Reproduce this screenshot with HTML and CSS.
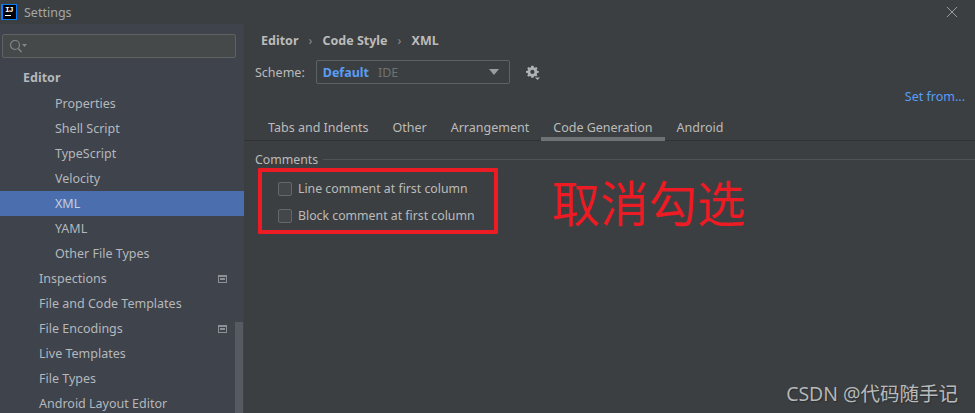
FILE: index.html
```html
<!doctype html>
<html lang="en">
<head>
<title>Settings</title>
<meta charset="utf-8">
<link rel="stylesheet" href="styles.css">
</head>
<body>

<div id="win">

	<div id="titlebar">
		<div id="logo">
			<span id="logoText">IJ</span>
			<span id="logoBar"></span>
		</div>
		<span id="titleText">Settings</span>
		<svg id="closeBtn" width="12" height="12" viewBox="0 0 12 12">
			<path d="M1 1 L11 11 M11 1 L1 11" stroke="#9a9c9e" stroke-width="1" fill="none"/>
		</svg>
	</div>

	<div id="content">

		<div id="sidebar">
			<div id="search">
				<svg width="20" height="14" viewBox="0 0 20 14">
					<circle cx="6" cy="6" r="4.5" stroke="#83878b" stroke-width="1.2" fill="none"/>
					<path d="M9.3 9.5 L12.5 13" stroke="#83878b" stroke-width="1.4" fill="none"/>
					<path d="M13 5 L18 5 L15.5 8 Z" fill="#83878b"/>
				</svg>
			</div>
			<a class="item head">Editor</a>
			<a class="item sub">Properties</a>
			<a class="item sub">Shell Script</a>
			<a class="item sub">TypeScript</a>
			<a class="item sub">Velocity</a>
			<a class="item sub active">XML</a>
			<a class="item sub">YAML</a>
			<a class="item sub">Other File Types</a>
			<a class="item">Inspections <i class="projIcon"></i></a>
			<a class="item">File and Code Templates</a>
			<a class="item">File Encodings <i class="projIcon"></i></a>
			<a class="item">Live Templates</a>
			<a class="item">File Types</a>
			<a class="item">Android Layout Editor</a>
			<div id="scrollThumb"></div>
		</div>

		<div id="main">
			<div id="crumbs">
				<span>Editor</span><em>›</em><span>Code Style</span><em>›</em><span>XML</span>
			</div>

			<div id="schemeRow">
				<label>Scheme:</label>
				<div id="combo">
					<b>Default</b>
					<span>IDE</span>
					<i id="comboArrow"></i>
				</div>
				<svg id="gear" width="18" height="18" viewBox="0 0 18 18">
					<path d="M7 1 H10 L10.4 3.1 L11.9 3.8 L13.7 2.6 L15.4 4.3 L14.2 6.1 L14.9 7.6 L17 8 V10.4 L14.9 10.8 L14.2 12.3 L15.2 14 L13.5 15.4 L11.9 14.6 L10.4 15.3 L10 17 H7 L6.6 15.3 L5.1 14.6 L3.3 15.8 L1.6 14.1 L2.8 12.3 L2.1 10.8 L0 10.4 V8 L2.1 7.6 L2.8 6.1 L1.6 4.3 L3.3 2.6 L5.1 3.8 L6.6 3.1 Z M8.5 6.4 A2.8 2.8 0 1 0 8.5 12 A2.8 2.8 0 1 0 8.5 6.4 Z" fill="#afb1b3" fill-rule="evenodd" transform="translate(1 1) scale(0.75)"/>
					<path d="M10 13.5 H15 L12.5 16 Z" fill="#afb1b3"/>
				</svg>
			</div>

			<div id="setFromRow"><a>Set from...</a></div>

			<div id="tabs">
				<a>Tabs and Indents</a>
				<a>Other</a>
				<a>Arrangement</a>
				<a class="on">Code Generation</a>
				<a>Android</a>
			</div>

			<div id="group">
				<div id="groupTitle"><span>Comments</span><hr></div>
				<label class="check"><i></i>Line comment at first column</label>
				<label class="check"><i></i>Block comment at first column</label>
			</div>
		</div>

	</div>

	<div id="redBox"></div>
	<div id="redText">取消勾选</div>
	<div id="mark">CSDN @代码随手记</div>

</div>

</body>
</html>
```

FILE: styles.css
```css
* { margin: 0; padding: 0; box-sizing: border-box; }
html, body { height: 100%; overflow: hidden; }

body {
	font-family: "Noto Sans", "Open Sans", sans-serif;
	font-size: 12.5px;
	color: #bbbbbb;
	background: #3c3f41;
}

#win {
	height: 100%; width: 100%;
	position: relative;
	display: flex;
	flex-direction: column;
	overflow: hidden;
}

/* title bar */
#titlebar {
	height: 24px;
	flex: none;
	display: flex;
	align-items: center;
	padding-left: 1px;
	padding-right: 17px;
	background: #3c3f41;
}
#logo {
	width: 16px; height: 16px;
	background: #000;
	border: 1px solid #087cfa;
	border-left-width: 2px;
	display: flex;
	flex-direction: column;
	padding: 1px 0 0 2px;
}
#logoText {
	font-family: "Liberation Mono", monospace;
	font-weight: bold;
	font-size: 8px;
	line-height: 7px;
	letter-spacing: -1px;
	color: #fff;
}
#logoBar {
	width: 6px; height: 1px;
	margin-top: 2px;
	background: #fff;
}
#titleText {
	margin-left: 7px;
	color: #a4a6a8;
}
#closeBtn { margin-left: auto; }

#content {
	flex: 1;
	min-height: 0;
	display: flex;
}

/* left tree */
#sidebar {
	width: 244px;
	flex: none;
	position: relative;
	overflow: hidden;
	padding-top: 10px;
	background: #3e434c;
}
#search {
	height: 24px;
	width: 234px;
	margin-left: 2px;
	margin-bottom: 7px;
	display: flex;
	align-items: center;
	padding-left: 6px;
	border: 1px solid #5f6263;
	border-radius: 2px;
	background: #45494a;
}
.item {
	height: 25px;
	flex: none;
	display: flex;
	align-items: center;
	padding-left: 39px;
	padding-right: 17px;
	white-space: nowrap;
	color: #b4b8bc;
}
.head {
	height: 26px;
	padding-left: 23px;
	padding-bottom: 2px;
	font-weight: bold;
}
.sub { padding-left: 55px; }
.active {
	background: #4b6eaf;
	color: #c6cfdc;
}
.projIcon {
	width: 9px; height: 8px;
	margin-left: auto;
	border: 1px solid #8d9196;
	border-top-width: 2px;
	background: linear-gradient(#8d9196, #8d9196) center / 5px 2px no-repeat;
}
#scrollThumb {
	position: absolute;
	right: 1px; bottom: 0;
	width: 8px; height: 91px;
	background: #565a61;
}

/* right panel */
#main {
	flex: 1;
	min-width: 0;
	display: flex;
	flex-direction: column;
}
#crumbs {
	height: 32px;
	display: flex;
	align-items: center;
	padding-left: 17px;
	font-weight: bold;
}
#crumbs em {
	font-style: normal;
	font-weight: normal;
	width: 24px;
	text-align: center;
	color: #8a8c8e;
}
#schemeRow {
	display: flex;
	align-items: center;
	height: 24px;
	margin-top: 4px;
	padding-left: 11px;
}
#combo {
	width: 194px; height: 24px;
	margin-left: 11px;
	display: flex;
	align-items: center;
	padding: 0 10px 0 6px;
	border: 1px solid #5f6263;
	border-radius: 2px;
	background: #3c3f41;
}
#combo b { color: #589df6; }
#combo span {
	margin-left: 9px;
	color: #6e7072;
}
#comboArrow {
	margin-left: auto;
	width: 0; height: 0;
	border-left: 5px solid transparent;
	border-right: 5px solid transparent;
	border-top: 6px solid #9a9c9e;
}
#gear {
	margin-left: 15px;
	margin-top: 2px;
}
#setFromRow {
	height: 24px;
	display: flex;
	align-items: center;
	justify-content: flex-end;
	padding-right: 10px;
}
#setFromRow a { color: #589df6; }
#tabs {
	height: 33px;
	display: flex;
	padding-left: 12px;
	border-bottom: 1px solid #323232;
}
#tabs a {
	display: flex;
	align-items: center;
	padding: 6px 12px 0;
	height: 32px;
	white-space: nowrap;
}
#tabs a.on {
	border-bottom: 4px solid #6f7275;
	height: 33px;
	padding-top: 9px;
}
#group {
	padding: 9px 0 0 11px;
	font-size: 12.3px;
}
#groupTitle {
	display: flex;
	align-items: center;
	height: 19px;
	margin-bottom: 6px;
}
#groupTitle hr {
	flex: 1;
	margin-left: 5px;
	border: none;
	border-top: 1px solid #505254;
}
.check {
	display: flex;
	align-items: center;
	height: 27px;
	padding-left: 23px;
}
.check i {
	width: 14px; height: 14px;
	margin-right: 6px;
	border: 1px solid #65686a;
	border-radius: 2px;
	background: #43474a;
}

/* annotations on top of the screenshot */
#redBox {
	position: absolute;
	left: 258px; top: 168px;
	width: 240px; height: 66px;
	border: 4px solid #ed1c24;
	border-radius: 1px;
}
#redText {
	position: absolute;
	left: 552px; top: 171px;
	font-family: "Noto Sans CJK SC", sans-serif;
	font-size: 48.5px;
	line-height: 60px;
	color: #ed1c24;
}
#mark {
	position: absolute;
	right: 17px; bottom: 7px;
	font-family: "Open Sans", "Noto Sans CJK SC", sans-serif;
	font-size: 19.5px;
	line-height: 24px;
	color: #b8babb;
	text-shadow: 1px 1px 1px #2c2e30;
}
```
